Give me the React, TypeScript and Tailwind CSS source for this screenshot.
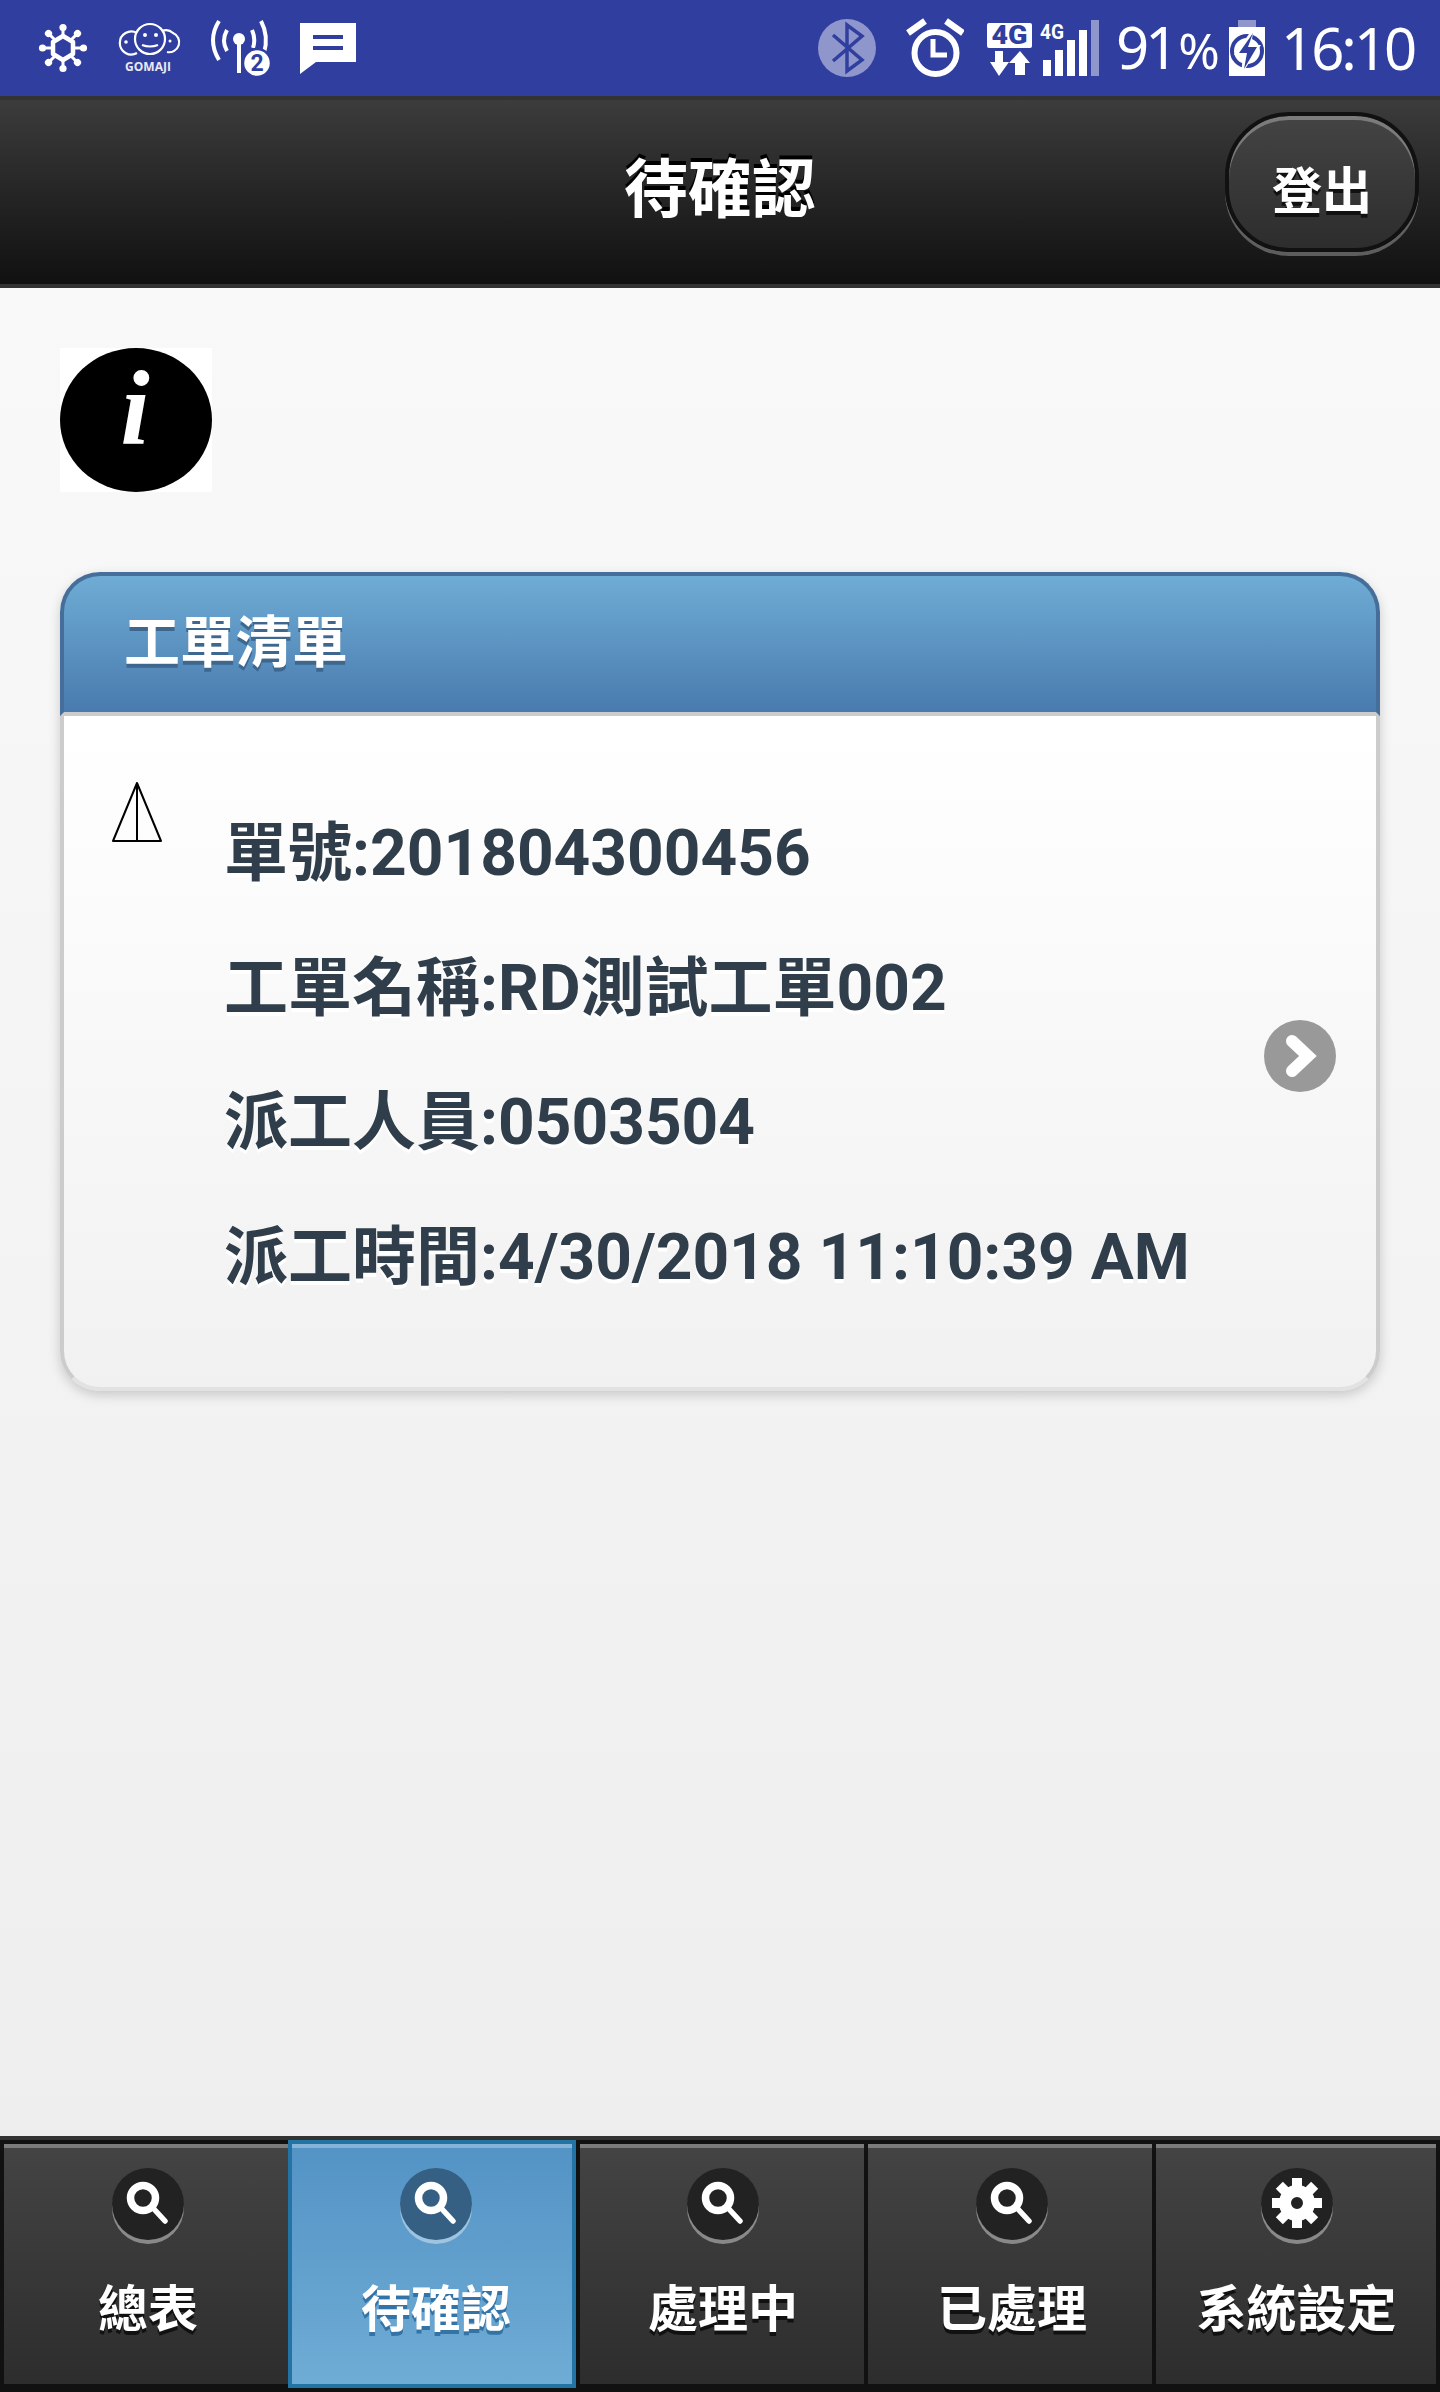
const tabs = [
    { label: "總表", icon: "search", active: false, offset: "pl-[4px]" },
    { label: "待確認", icon: "search", active: true, offset: "pl-[8px]" },
    { label: "處理中", icon: "search", active: false, offset: "pl-[2px]" },
    { label: "已處理", icon: "search", active: false, offset: "pl-[4px]" },
    { label: "系統設定", icon: "gear", active: false, offset: "pl-[1px]" },
];

const rows = [
    "單號:201804300456",
    "工單名稱:RD測試工單002",
    "派工人員:0503504",
    "派工時間:4/30/2018 11:10:39 AM",
];

function SunIcon() {
    const angles = [0, 45, 90, 135, 180, 225, 270, 315];
    return (
        <svg width="56" height="64" viewBox="36 16 56 64" className="ml-[36px]">
            {angles.map((a) => (
                <g key={a} transform={`rotate(${a} 63 48)`}>
                    <line x1="63" y1="36" x2="63" y2="28" stroke="#fff" strokeWidth="3" />
                    <circle cx="63" cy="27.5" r="3.6" fill="#fff" />
                </g>
            ))}
            <polygon points="63,36 73,42 73,54 63,60 53,54 53,42" fill="none" stroke="#fff" strokeWidth="4.5" strokeLinejoin="round" />
        </svg>
    );
}

function GomajiIcon() {
    return (
        <div className="ml-[22px] relative w-[68px] h-[64px]">
            <svg width="68" height="48" viewBox="118 16 68 48" className="absolute left-0 top-0">
                <path d="M141 33a11.5 11.5 0 1 0 0 20" fill="none" stroke="#fff" strokeWidth="2.2" />
                <path d="M166 31a10 10 0 0 1 11 2a10 10 0 0 1 -6 19" fill="none" stroke="#fff" strokeWidth="2.2" />
                <circle cx="154" cy="39" r="15" fill="#303f9f" stroke="#fff" strokeWidth="2.2" />
                <circle cx="149" cy="35" r="2" fill="#fff" />
                <circle cx="160" cy="35" r="2" fill="#fff" />
                <path d="M146 45q8 3 16 0" fill="none" stroke="#fff" strokeWidth="2" />
                <circle cx="130" cy="42" r="1.8" fill="#fff" />
                <circle cx="174" cy="41" r="1.5" fill="#fff" />
            </svg>
            <span className="absolute left-0 right-0 top-[45px] text-center text-[12px] leading-[12px] font-bold text-[#e8e9f4] font-['Open_Sans',sans-serif]">
                GOMAJI
            </span>
        </div>
    );
}

function BroadcastIcon() {
    return (
        <svg width="66" height="64" viewBox="208 16 66 64" className="ml-[26px]">
            <path d="M219 21q-12 19 0 39" fill="none" stroke="#fff" strokeWidth="4" />
            <path d="M227 30q-6 11 0 21" fill="none" stroke="#fff" strokeWidth="4" />
            <path d="M261 21q8 15 3 32" fill="none" stroke="#fff" strokeWidth="4" />
            <path d="M252 30q4 9 1 18" fill="none" stroke="#fff" strokeWidth="4" />
            <circle cx="239" cy="39" r="6" fill="#fff" />
            <rect x="237" y="40" width="4" height="33" fill="#fff" />
            <circle cx="257" cy="63" r="14" fill="#fff" stroke="#303f9f" strokeWidth="2.5" />
            <text x="257" y="71" textAnchor="middle" fontSize="23" fontWeight="700" fill="#303f9f" fontFamily="Roboto, sans-serif">
                2
            </text>
        </svg>
    );
}

function MessageIcon() {
    return (
        <svg width="60" height="64" viewBox="298 16 60 64" className="ml-[24px]">
            <path d="M300 23H356V62H316L300 74Z" fill="#fff" />
            <rect x="313" y="35" width="30" height="4" fill="#303f9f" />
            <rect x="313" y="46" width="30" height="4" fill="#303f9f" />
        </svg>
    );
}

function BluetoothIcon() {
    return (
        <svg width="62" height="64" viewBox="816 16 62 64">
            <ellipse cx="847" cy="48" rx="29" ry="29" fill="#8f96cb" />
            <path d="M833 35L862 60L847 71V25L862 36L833 61" fill="none" stroke="#303f9f" strokeWidth="3.5" />
        </svg>
    );
}

function AlarmIcon() {
    return (
        <svg width="60" height="64" viewBox="904 16 60 64" className="ml-[26px]">
            <circle cx="935.5" cy="53" r="21" fill="none" stroke="#fff" strokeWidth="6" />
            <path d="M908 33L925 21M946 21L963 33" fill="none" stroke="#fff" strokeWidth="6.5" />
            <path d="M933 39V55H947" fill="none" stroke="#fff" strokeWidth="5" />
        </svg>
    );
}

function NetworkIcon() {
    return (
        <svg width="118" height="64" viewBox="984 16 118 64" className="ml-[20px]">
            <rect x="987" y="23" width="45" height="25" rx="2" fill="#fff" />
            <text x="1009.5" y="44" textAnchor="middle" fontSize="25" fontWeight="900" fill="#303f9f" fontFamily="Roboto, sans-serif" textLength="36" lengthAdjust="spacingAndGlyphs">
                4G
            </text>
            <polygon points="995,51 1003,51 1003,62 1009,62 999,76 990,62 995,62" fill="#fff" />
            <polygon points="1020,51 1030,63 1025,63 1025,75 1015,75 1015,63 1009,63" fill="#fff" />
            <text x="1052" y="39" textAnchor="middle" fontSize="21" fontWeight="700" fill="#fff" fontFamily="Roboto, sans-serif" textLength="24" lengthAdjust="spacingAndGlyphs">
                4G
            </text>
            <rect x="1043" y="60" width="8" height="16" fill="#fff" />
            <rect x="1055" y="50" width="8" height="26" fill="#fff" />
            <rect x="1067" y="40" width="8" height="36" fill="#fff" />
            <rect x="1079" y="30" width="8" height="46" fill="#fff" />
            <rect x="1091" y="20" width="8" height="56" fill="#8f96cb" />
        </svg>
    );
}

function BatteryIcon() {
    return (
        <svg width="40" height="64" viewBox="1227 16 40 64">
            <rect x="1238" y="20" width="18" height="7" fill="#8f96cb" />
            <rect x="1229" y="27" width="36" height="49" fill="#fff" />
            <circle cx="1247" cy="51" r="15" fill="none" stroke="#303f9f" strokeWidth="4" />
            <polygon points="1254,27 1234,55 1243,55 1241,75 1261,45 1251,45" fill="#fff" />
            <polygon points="1253,33 1239,53 1247,53 1244,69 1257,47 1248,47" fill="#303f9f" />
        </svg>
    );
}

function SearchGlyph() {
    return (
        <svg width="72" height="72" viewBox="0 0 72 72" className="blur-[0.6px]">
            <circle cx="31" cy="30" r="12.5" fill="none" stroke="#fff" strokeWidth="7.5" />
            <line x1="41" y1="40" x2="53" y2="53" stroke="#fff" strokeWidth="5.5" strokeLinecap="round" />
        </svg>
    );
}

function GearGlyph() {
    const angles = [0, 45, 90, 135, 180, 225, 270, 315];
    return (
        <svg width="72" height="72" viewBox="0 0 72 72" className="blur-[0.6px]">
            {angles.map((a) => (
                <rect key={a} x="31" y="10" width="10" height="12" fill="#fff" transform={`rotate(${a} 36 35)`} />
            ))}
            <circle cx="36" cy="35" r="12" fill="none" stroke="#fff" strokeWidth="12" />
        </svg>
    );
}

export default function App() {
    return (
        <div className="w-[1440px] h-[2392px] flex flex-col overflow-hidden font-['Roboto','Noto_Sans_CJK_TC',sans-serif]">
            {/* Android status bar */}
            <div className="h-[96px] shrink-0 bg-[#303f9f] flex items-center justify-between text-white">
                <div className="flex items-center">
                    <SunIcon />
                    <GomajiIcon />
                    <BroadcastIcon />
                    <MessageIcon />
                </div>
                <div className="flex items-center pr-[24px]">
                    <BluetoothIcon />
                    <AlarmIcon />
                    <NetworkIcon />
                    <span className="ml-[14px] w-[111px] text-[58px] leading-[64px] font-['Noto_Sans',sans-serif] tracking-[-4px] whitespace-nowrap">
                        91<span className="ml-[4px] text-[50px] tracking-normal">%</span>
                    </span>
                    <BatteryIcon />
                    <span className="ml-[14px] w-[135px] text-[58px] leading-[64px] font-['Noto_Sans',sans-serif] tracking-[-3px]">16:10</span>
                </div>
            </div>

            {/* Header */}
            <div className="h-[192px] shrink-0 border-y-4 border-[#333] bg-gradient-to-b from-[#3c3c3c] to-[#111] grid grid-cols-[1fr_auto_1fr] items-center">
                <div />
                <h1 className="text-[64px] font-bold text-white [text-shadow:0_-4px_0_#000] pb-[3px]">待確認</h1>
                <div className="flex justify-end pr-[21px] pb-[20px]">
                    <button className="w-[194px] h-[140px] rounded-[64px] border-4 border-[#111] bg-gradient-to-b from-[#444] to-[#2d2d2d] shadow-[inset_0_4px_0_rgba(255,255,255,0.3),0_4px_0_rgba(255,255,255,0.3)] text-[50px] font-bold text-white [text-shadow:0_4px_0_#111] pt-[20px]">
                        登出
                    </button>
                </div>
            </div>

            {/* Page content */}
            <div className="flex-1 bg-gradient-to-b from-[#f9f9f9] to-[#eee] px-[60px] pt-[60px]">
                <svg width="152" height="144" viewBox="0 0 152 144" className="block bg-white">
                    <ellipse cx="76" cy="72" rx="76" ry="72" fill="#000" />
                    <text x="75" y="96" textAnchor="middle" fontSize="105" fontWeight="700" fontStyle="italic" fill="#fff" fontFamily="'Liberation Serif', serif">
                        i
                    </text>
                </svg>

                <div className="mt-[80px] h-[819px] rounded-[40px] shadow-[0_4px_12px_rgba(0,0,0,0.18)]">
                    <div className="h-[144px] border-4 border-[#456f9a] border-b-[#ccc] rounded-t-[40px] bg-gradient-to-b from-[#6facd5] to-[#497bae] pl-[60px] flex items-center">
                        <h2 className="text-[56px] font-bold text-white [text-shadow:0_4px_0_#3e6790] pb-[2px]">工單清單</h2>
                    </div>
                    <div className="h-[675px] border-4 border-t-0 border-[#ccc] border-b-[#e2e2e2] rounded-b-[40px] bg-gradient-to-b from-[#fff] to-[#f1f1f1] flex">
                        <svg width="52" height="62" viewBox="0 0 52 62" className="ml-[47px] mt-[65px] shrink-0">
                            <path d="M26 2L2 60H50Z M26 2V60" fill="none" stroke="#000" strokeWidth="2" strokeLinejoin="round" />
                        </svg>
                        <div className="ml-[61px] mt-[71px] flex-1">
                            {rows.map((r) => (
                                <p key={r} className="h-[134.5px] text-[64px] leading-[134.5px] font-bold text-[#2f3e4a] [text-shadow:0_4px_0_#fff] whitespace-nowrap">
                                    {r}
                                </p>
                            ))}
                        </div>
                        <div className="w-[72px] h-[72px] rounded-full bg-[#999] mt-[304px] mr-[40px] shrink-0">
                            <svg width="72" height="72" viewBox="0 0 72 72">
                                <path d="M28 21L44 36L28 51" fill="none" stroke="#fff" strokeWidth="12" strokeLinecap="round" strokeLinejoin="miter" />
                            </svg>
                        </div>
                    </div>
                </div>
            </div>

            {/* Bottom tab bar */}
            <nav className="h-[256px] shrink-0 border-t-4 border-[#333] bg-[#111] grid grid-cols-5">
                {tabs.map((t, i) => (
                    <div
                        key={t.label}
                        className={
                            t.active
                                ? "h-[248px] border-4 border-[#2373a5] bg-gradient-to-b from-[#5393c5] to-[#6facd5] shadow-[inset_0_4px_0_rgba(255,255,255,0.3)] flex flex-col items-center pt-[24px] " + t.offset
                                : (i === 4 ? "border-r-4 " : "") +
                                  "h-[248px] border-l-4 border-t-4 border-b-4 border-[#111] bg-gradient-to-b from-[#444] to-[#2d2d2d] shadow-[inset_0_4px_0_rgba(255,255,255,0.3)] flex flex-col items-center pt-[24px] " +
                                  t.offset
                        }
                    >
                        <div
                            className={
                                "w-[72px] h-[72px] rounded-full shadow-[0_4px_0_rgba(255,255,255,0.4)] " +
                                (t.active ? "bg-[#356084]" : "bg-[#222]")
                            }
                        >
                            {t.icon === "gear" ? <GearGlyph /> : <SearchGlyph />}
                        </div>
                        <span
                            className={
                                "mt-[34px] text-[50px] leading-[72px] font-bold text-white whitespace-nowrap " +
                                (t.active ? "[text-shadow:0_4px_0_#3373a5]" : "[text-shadow:0_4px_0_#111]")
                            }
                        >
                            {t.label}
                        </span>
                    </div>
                ))}
            </nav>
        </div>
    );
}
